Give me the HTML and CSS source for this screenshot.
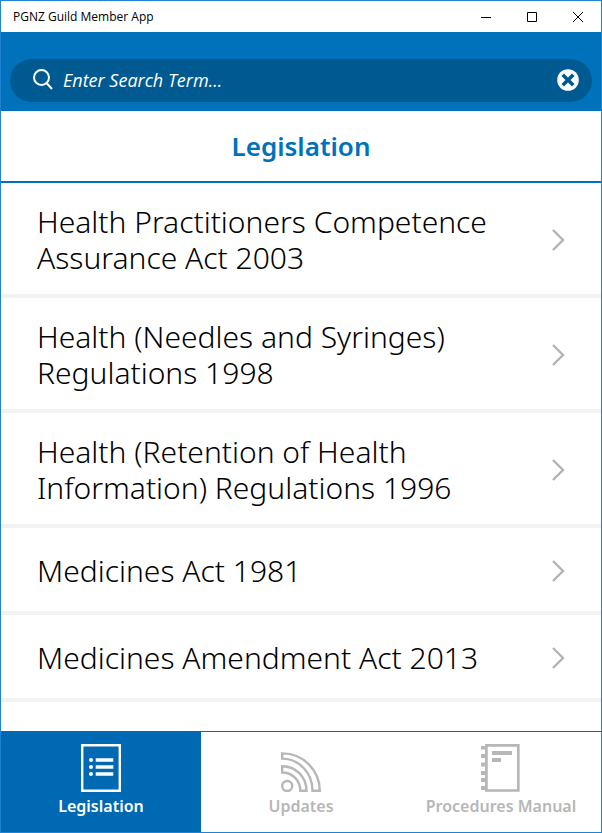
FILE: index.html
```html
<!DOCTYPE html>
<html lang="en">
<head>
<meta charset="utf-8">
<meta name="viewport" content="width=device-width, initial-scale=1">
<title>PGNZ Guild Member App</title>
<link rel="stylesheet" href="styles.css">
</head>
<body>
<div class="window">
  <div class="titlebar">
    <span class="titlebar-name">PGNZ Guild Member App</span>
    <div class="window-controls">
      <button type="button" aria-label="Minimize"><svg width="10" height="10" viewBox="0 0 10 10" shape-rendering="crispEdges"><path d="M0 5h10v1H0z"/></svg></button>
      <button type="button" aria-label="Maximize"><svg width="10" height="10" viewBox="0 0 10 10" fill="none" stroke="#000"><path d="M.5.5h9v9h-9z"/></svg></button>
      <button type="button" aria-label="Close"><svg width="10" height="10" viewBox="0 0 10 10" fill="none" stroke="#000"><path d="M0 0l10 10M10 0L0 10"/></svg></button>
    </div>
  </div>
  <header class="header">
    <form class="search" role="search">
      <svg width="20" height="21" viewBox="0 0 20 21" fill="none" stroke="#fff" stroke-width="2"><circle cx="8.5" cy="8.5" r="7.5"/><path d="M13.5 14l5.5 6"/></svg>
      <input type="text" aria-label="Search" placeholder="Enter Search Term...">
      <button type="reset" aria-label="Clear search"><svg width="22" height="22" viewBox="0 0 22 22"><circle cx="11" cy="11" r="10.8" fill="#fff"/><path d="M5.700 5.700l10.600 10.600M16.300 5.700L5.700 16.300" stroke="#005a92" stroke-width="3.600"/></svg></button>
    </form>
  </header>
  <h1 class="heading">Legislation</h1>
  <main class="content">
    <ul class="list">
      <li><a href="#"><span>Health Practitioners Competence Assurance Act 2003</span><svg class="chevron" width="13" height="22" viewBox="0 0 13 22"><path d="M1 1l10 10L1 21"/></svg></a></li>
      <li><a href="#"><span>Health (Needles and Syringes) Regulations 1998</span><svg class="chevron" width="13" height="22" viewBox="0 0 13 22"><path d="M1 1l10 10L1 21"/></svg></a></li>
      <li><a href="#"><span>Health (Retention of Health Information) Regulations 1996</span><svg class="chevron" width="13" height="22" viewBox="0 0 13 22"><path d="M1 1l10 10L1 21"/></svg></a></li>
      <li><a href="#"><span>Medicines Act 1981</span><svg class="chevron" width="13" height="22" viewBox="0 0 13 22"><path d="M1 1l10 10L1 21"/></svg></a></li>
      <li><a href="#"><span>Medicines Amendment Act 2013</span><svg class="chevron" width="13" height="22" viewBox="0 0 13 22"><path d="M1 1l10 10L1 21"/></svg></a></li>
    </ul>
  </main>
  <nav class="tabs">
    <a class="tab active" href="#" aria-current="page">
      <svg width="40" height="48" viewBox="0 0 40 48" fill="currentColor"><path d="M1.2 1.2h37.6v45.6H1.2z" fill="none" stroke="currentColor" stroke-width="2.4"/><circle cx="10" cy="16" r="2"/><circle cx="10" cy="23" r="2"/><circle cx="10" cy="30" r="2"/><path d="M14.7 14.200h17.600v3.600H14.700zM14.700 21.200h17.600v3.600H14.700zM14.700 28.200h17.600v3.600H14.700z"/></svg>
      <span>Legislation</span>
    </a>
    <a class="tab" href="#">
      <svg width="40" height="48" viewBox="0 0 40 48" fill="none" stroke="currentColor" stroke-width="2.4"><circle cx="6.2" cy="42" r="5"/><path d="M1.200 9.400v5.200C18 14.600 31.500 29 31.500 46.800H38.800C38.800 26 22 9.400 1.200 9.400z"/><path d="M1.200 22.200v6.300C11 28.500 19.300 36 19.300 46.800H25.500C25.500 33 15 22.200 1.200 22.200z"/></svg>
      <span>Updates</span>
    </a>
    <a class="tab" href="#">
      <svg width="40" height="48" viewBox="0 0 40 48" fill="currentColor"><path d="M5.400 1.300h31.900v45.200H5.400z" fill="none" stroke="currentColor" stroke-width="2.700"/><path d="M0 2h5v3.500H0zM0 10h5v4H0zM0 18.500h5v4H0zM0 27h5v4H0zM0 34h5v4H0zM0 42h5v4H0zM11 7h20v4H11zM11 14h9v4h-9z"/></svg>
      <span>Procedures Manual</span>
    </a>
  </nav>
</div>
</body>
</html>
```
FILE: styles.css
```css
* {
  box-sizing: border-box;
}

body {
  margin: 0;
  font-family: "Noto Sans", sans-serif;
  color: #000;
  background: #fff;
}

button {
  display: grid;
  place-items: center;
  padding: 0;
  border: 0;
  background: none;
}

a {
  color: inherit;
  text-decoration: none;
}

.window {
  display: flex;
  flex-direction: column;
  height: 100vh;
  border: 1px solid #1f83d3;
}

.titlebar {
  display: flex;
  flex: none;
  align-items: center;
  justify-content: space-between;
  height: 31px;
  padding-left: 12px;
  font-family: "Open Sans", sans-serif;
  font-size: 12px;
}

.window-controls {
  display: grid;
  grid-template-columns: repeat(3, 46px);
  height: 100%;
}

.header {
  flex: none;
  padding: 27px 9px 9px;
  background: #0072bc;
}

.search {
  display: flex;
  align-items: center;
  gap: 10px;
  height: 43px;
  padding: 0 13px 2px 23px;
  border-radius: 22px;
  background: #005a92;
}

.search input {
  flex: 1;
  min-width: 0;
  padding: 0;
  border: 0;
  outline: 0;
  background: none;
  color: #fff;
  font: italic 18px "Open Sans", sans-serif;
}

.search input::placeholder {
  color: #fff;
  opacity: 1;
}

.heading {
  flex: none;
  margin: 0;
  border-bottom: 2px solid #0072bc;
  color: #0072bc;
  font-size: 26px;
  font-weight: 600;
  line-height: 70px;
  text-align: center;
}

.content {
  flex: 1;
  min-height: 0;
  overflow: hidden;
}

.list {
  margin: 0;
  padding: 0;
  list-style: none;
}

.list a {
  display: flex;
  align-items: center;
  justify-content: space-between;
  gap: 48px;
  min-height: 87px;
  padding: 21px 36px 18px;
  border-bottom: 4px solid #f2f2f2;
  font-size: 30px;
  font-weight: 300;
  line-height: 36px;
}

.chevron {
  flex: none;
  fill: none;
  stroke: #b3b3b3;
  stroke-width: 2.4;
}

.tabs {
  display: grid;
  flex: none;
  grid-template-columns: repeat(3, 1fr);
  border-top: 1px solid #0069b4;
}

.tab {
  display: flex;
  flex-direction: column;
  align-items: center;
  gap: 4px;
  padding: 12px 0 16px;
  color: #b7b7b7;
  font-size: 16px;
  font-weight: 600;
  line-height: 20px;
}

.tab.active {
  color: #fff;
  background: #0069b4;
}
```
